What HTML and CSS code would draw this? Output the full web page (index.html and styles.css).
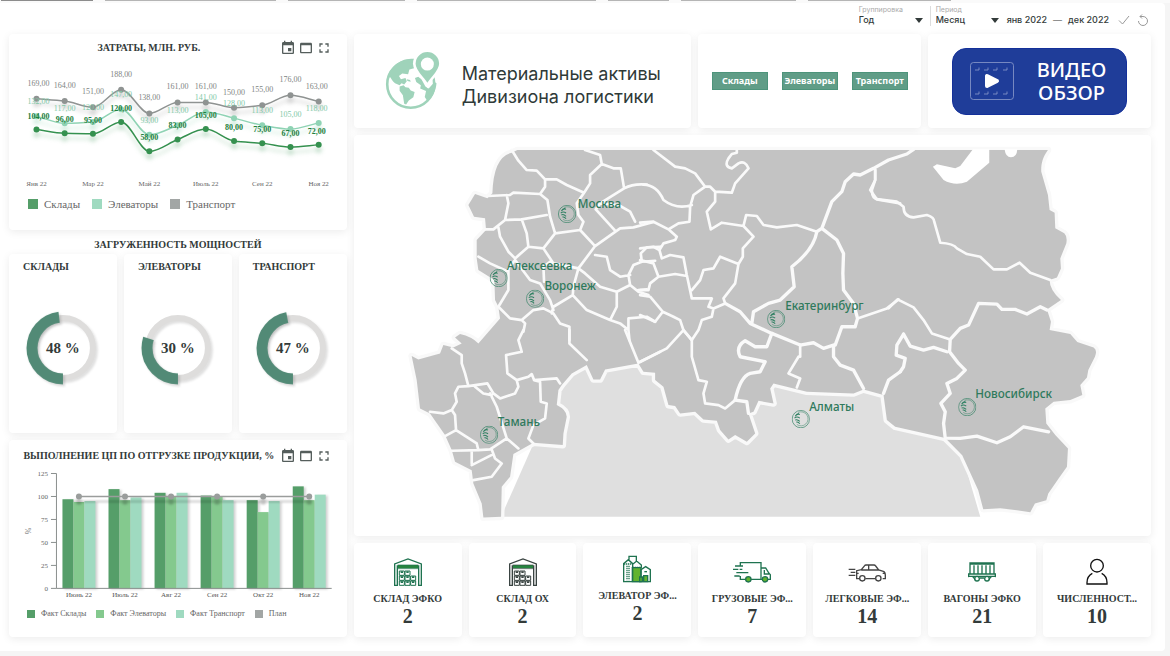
FILE: index.html
```html
<!DOCTYPE html>
<html lang="ru">
<head>
<meta charset="utf-8">
<title>Материальные активы Дивизиона логистики</title>
<link rel="stylesheet" href="styles.css">
</head>
<body>
<svg class="defs" aria-hidden="true">
  <symbol id="i-event" viewBox="0 0 24 24"><path d="M17 12h-5v5h5v-5zM16 1v2H8V1H6v2H5c-1.11 0-1.99.9-1.99 2L3 19c0 1.1.89 2 2 2h14c1.1 0 2-.9 2-2V5c0-1.1-.9-2-2-2h-1V1h-2zm3 18H5V8h14v11z"/></symbol>
  <symbol id="i-window" viewBox="0 0 24 24"><path d="M19 4H5c-1.11 0-2 .9-2 2v12c0 1.1.89 2 2 2h14c1.1 0 2-.9 2-2V6c0-1.1-.89-2-2-2zm0 14H5V8h14v10z"/></symbol>
  <symbol id="i-full" viewBox="0 0 24 24"><path d="M7 14H5v5h5v-2H7v-3zm-2-4h2V7h3V5H5v5zm12 7h-3v2h5v-5h-2v3zM14 5v2h3v3h2V5h-5z"/></symbol>
  <symbol id="i-down" viewBox="0 0 8 5"><path d="M0 0h8L4 5z"/></symbol>
  <symbol id="i-store" viewBox="0 0 84 84">
    <path d="M2 82V18L42 3l40 15v64h-8V24H10v58z" fill="none" stroke="currentColor" stroke-width="4"/>
    <rect x="12" y="21" width="60" height="10" fill="#26843f"/>
    <path d="M11 21h62M11 32h62" stroke="currentColor" stroke-width="2"/>
    <path d="M16 39h15v13H16zM33 39h15v13H33zM16 54h15v13H16zM33 54h15v13H33zM50 54h15v13H50zM16 69h15v13H16zM33 69h15v13H33zM50 69h15v13H50z" fill="#fff" stroke="currentColor" stroke-width="3"/>
    <path d="M20 40h7v5h-7zM37 40h7v5h-7zM20 55h7v5h-7zM37 55h7v5h-7zM54 55h7v5h-7zM20 70h7v5h-7zM37 70h7v5h-7zM54 70h7v5h-7z" fill="currentColor"/>
  </symbol>
  <symbol id="i-pin" viewBox="-27 -27 54 54">
    <g fill="none" stroke="#2f8062">
      <circle r="26" stroke-width="2"/>
      <path d="M-8-20a21 21 0 1 1-4 36" stroke-width="1.400"/>
      <path d="M-17-9q6-8 14-5M-19-3q7-6 16 0M-17 3q6-4 14 4M-14 9q6-2 11 5M-5-18q-9 3-12 9" stroke-width="3"/>
    </g>
  </symbol>
</svg>

<nav class="tabs" aria-label="Вкладки"><i class="tab tab--on"></i><i class="tab"></i><i class="tab"></i><i class="tab"></i><i class="tab"></i><i class="tab"></i><i class="tab"></i></nav>

<main class="page">
  <form class="filters">
    <div class="filter">
      <label for="group">Группировка</label>
      <div class="pick"><select id="group"><option>Год</option></select><svg class="pick-arrow"><use href="#i-down"/></svg></div>
    </div>
    <div class="filter filter--next">
      <label for="period">Период</label>
      <div class="pick"><select id="period"><option>Месяц</option></select><svg class="pick-arrow"><use href="#i-down"/></svg></div>
    </div>
    <div class="range"><span>янв 2022</span><span class="dash">—</span><span>дек 2022</span></div>
    <button class="tool" type="button" aria-label="Применить"><svg viewBox="0 0 12 12"><path d="M1 6.500 4.500 10 11 2"/></svg></button>
    <button class="tool" type="button" aria-label="Сбросить"><svg viewBox="0 0 12 12"><path d="M1.500 7A4.500 4.500 0 1 0 6 2.500H3M5 .5 3 2.500l2 2"/></svg></button>
  </form>

  <div class="board">
    <div class="side">
      <section class="card chart">
        <header class="card-head"><h2>ЗАТРАТЫ, МЛН. РУБ.</h2>
          <div class="tools"><button type="button" aria-label="Период"><svg><use href="#i-event"/></svg></button><button type="button" aria-label="Окно"><svg><use href="#i-window"/></svg></button><button type="button" aria-label="На весь экран"><svg><use href="#i-full"/></svg></button></div>
        </header>
        <svg class="plot" id="costs" viewBox="9 62 338 128" role="img" aria-label="Затраты по месяцам"></svg>
        <ul class="legend legend--big"><li><i class="c-store"></i>Склады</li><li><i class="c-elev"></i>Элеваторы</li><li><i class="c-gray"></i>Транспорт</li></ul>
      </section>

      <h2 class="side-title">ЗАГРУЖЕННОСТЬ МОЩНОСТЕЙ</h2>
      <div class="gauges">
        <section class="card gauge"><h3>СКЛАДЫ</h3>
          <svg viewBox="-40 -40 80 80"><circle class="ring" r="30"/><circle class="arc" r="31" pathLength="100" stroke-dasharray="48 100" transform="rotate(90)"/><text y="5">48 %</text></svg></section>
        <section class="card gauge"><h3>ЭЛЕВАТОРЫ</h3>
          <svg viewBox="-40 -40 80 80"><circle class="ring" r="30"/><circle class="arc" r="31" pathLength="100" stroke-dasharray="30 100" transform="rotate(90)"/><text y="5">30 %</text></svg></section>
        <section class="card gauge"><h3>ТРАНСПОРТ</h3>
          <svg viewBox="-40 -40 80 80"><circle class="ring" r="30"/><circle class="arc" r="31" pathLength="100" stroke-dasharray="47 100" transform="rotate(90)"/><text y="5">47 %</text></svg></section>
      </div>

      <section class="card chart chart--bars">
        <header class="card-head"><h2>ВЫПОЛНЕНИЕ ЦП ПО ОТГРУЗКЕ ПРОДУКЦИИ, %</h2>
          <div class="tools"><button type="button" aria-label="Период"><svg><use href="#i-event"/></svg></button><button type="button" aria-label="Окно"><svg><use href="#i-window"/></svg></button><button type="button" aria-label="На весь экран"><svg><use href="#i-full"/></svg></button></div>
        </header>
        <svg class="plot" id="plan" viewBox="9 470 338 134" role="img" aria-label="Выполнение плана"></svg>
        <ul class="legend"><li><i class="c-store"></i>Факт Склады</li><li><i class="c-mid"></i>Факт Элеваторы</li><li><i class="c-elev"></i>Факт Транспорт</li><li><i class="c-gray"></i>План</li></ul>
      </section>
    </div>

    <div class="content">
      <section class="card brand">
        <svg class="globe" viewBox="104 150 174 190">
          <g fill="#9fd3ba">
            <path d="M194 177C150 172 113 208 110 248l10-16c6 8 8 14 16 20l14 6 6-6 8 4 8-10-4-10-14 4-6-10 10-8 18 2 4-14 14-4 4-8-8-6 10-6-6-8z"/>
            <path d="M150 262l12-4 6 6 10 2 6 8 12 5-4 16-14 10-8 12-6-2-4-26-10-14zM172 240l10 2 2 5-10-2zM197 236l10-4 10 8 12 22 10 6 18-20 6 4c-2 22-10 42-28 54l-8-12 4-18-18-8 2-10-14-10z"/>
          </g>
          <circle cx="184" cy="255" r="72" fill="none" stroke="#9fd3ba" stroke-width="8"/>
          <path d="M235 258c-10-22-40-40-40-66a40 40 0 0 1 80 0c0 26-30 44-40 66z" fill="#9fd3ba" stroke="#fff" stroke-width="8"/>
          <circle cx="235" cy="193" r="20" fill="#fff"/>
        </svg>
        <h1>Материальные активы<br>Дивизиона логистики</h1>
      </section>
      <nav class="card links"><a href="#stores">Склады</a><a href="#elevators">Элеваторы</a><a href="#transport">Транспорт</a></nav>
      <section class="card video"><button class="video-btn" type="button">
        <svg viewBox="0 0 44 38"><rect x=".5" y=".5" width="43" height="37" rx="3" fill="none" stroke="#8d9ccc" stroke-width=".8"/>
          <path d="M5 8h4V5.500M14 8h4V5.500M23 8h4V5.500M33 8h4V5.500M5 32h4v-2.500M14 32h4v-2.500M23 32h4v-2.500M33 32h4v-2.500" fill="none" stroke="#8d9ccc" stroke-width=".8"/>
          <path d="M17 14v10l10-5z" fill="#fff" stroke="#fff" stroke-width="4" stroke-linejoin="round"/></svg>
        <span>ВИДЕО<br>ОБЗОР</span></button></section>

      <section class="card map">
        <svg viewBox="-138 -15 2391 1200" role="img" aria-label="Карта активов">
          <path class="steppe" d="M303 1130H1740L1686 945 1450 765 1000 600 700 600 480 730z"/>
          <path class="land" d="M352 30H1943C1925 55 1922 75 1923 95L1943 165 1948 210 1963 218 1965 265 1992 280Q2002 290 1998 310L1980 355 1982 385 1970 412 1948 420Q1948 450 1982 480L1940 508 1952 545 1948 570 2010 582 2031 606 2080 622Q2092 630 2084 650L2064 690 2060 712 2040 735 2046 765 2010 780 1960 785 1935 805 1938 850 1965 885 2003 925 2000 980 1975 1015 1944 1060 1938 1080 1904 1090 1890 1116 1850 1110 1800 1104 1749 1107 1734 1050 1686 945 1635 894 1485 860 1460 840 1450 765 1390 748 1360 760 1220 755 1120 730 1110 745 1120 790 1075 782 1060 815 1045 820 1065 880 1040 905 1005 885 985 898 960 870 950 842 910 838 885 815 840 820 825 798 805 795 790 740 765 720 765 698 730 695 715 670 615 688 600 718 580 718 560 675 515 700 485 735 475 750 470 795Q500 810 500 830L490 880 488 915 400 908 340 942 330 1010 305 1040 303 1130 250 1132 245 1090 220 1030 215 990 165 965 155 930 135 885 90 820 60 805 50 720 35 648 55 658 120 640 130 615 160 622 185 610 165 592 180 582Q215 590 235 610L300 535 295 500 285 480 283 420 235 390 230 355 230 300 258 270 255 235 222 230 205 195 225 162 262 175 277 160Q280 50 335 38z"/>
          <path class="lake" d="M1718 28H1767V68L1700 125Q1665 140 1630 120L1598 80 1610 73 1665 85 1680 78zM1813 28H1851Q1850 52 1832 52 1816 52 1813 28z"/>
          <g class="line">
            <path d="M335 30L355 62 380 90 410 92 435 118 470 118 500 135 552 158M435 118V140L420 162 340 158 330 165 262 168M420 162L442 180 450 230 465 280 540 270 585 318M552 158L530 190 535 225 550 245 540 270M552 158L570 130V105L605 72 600 45 555 30M605 72L640 85H662L672 145 600 190 587 208 645 272M672 145Q700 130 740 134M600 190L655 195 690 215 705 245M585 318L660 265 700 262 760 246M320 165L325 190 315 240 365 238 440 225M315 240L280 268H255M365 238L380 280 385 320 345 355 325 335 300 290 295 262M385 320L430 325 465 280M430 325L460 370 535 385 585 318M345 360L325 385V450L295 500M235 350L270 370 325 395M345 360L390 420 420 430 450 480 460 510M460 370L450 365 430 380 432 425M535 385L520 440 518 465 460 500 455 520M518 465L560 510 630 540 650 500V455L600 440 555 400 535 385M585 345L620 350 630 390 660 410 690 405M650 455L690 435 685 405 700 375 725 365 765 362M725 365L722 340 740 322 780 320M690 435L715 455 745 465M715 450L740 448M630 540L660 550 685 570V535L740 530 765 545M685 570L688 600M295 500L330 535 365 540 375 550 370 575M365 540L400 510 430 505 460 520 480 550 508 560V600"/>
            <path transform="translate(0 570)" d="M508 0V40L560 90M370 0L355 30 365 65 318 75 322 130 350 150 385 140 395 132 402 150 470 145 480 160M350 150L355 170 345 190 300 205 280 190 262 160 205 168 175 170 165 190 170 215 155 240 130 250 90 245M155 55L185 75V100L195 130 205 168M155 240L165 255 168 300 230 340 235 360 270 358 320 325 355 355M168 300L135 318M270 190L290 230 320 325M225 170L250 190 275 195M155 362L235 360M215 362V400M275 358L285 385 305 400 275 440 220 450M215 405L280 372M402 150L420 155 422 215 440 220 435 265 400 285 385 325 400 340M675 0L715 98 780 65"/>
            <path transform="translate(720)" d="M40 30L105 80 135 85 165 100 195 140 160 165 150 200 148 245 115 250 85 268 40 245 0 248M10 134Q50 135 70 180 110 210 155 195M85 268L110 290 105 300 70 310 58 330 65 355 90 345 130 352 140 405 155 475M195 140L210 140 225 155V185L200 215 212 268 245 248 310 258 340 290 308 325V350L295 372 240 350 220 385 190 390 180 420 155 450M225 155L275 158 285 130 325 85Q315 60 295 70L275 85Q250 80 265 55L275 42 290 38V30M310 258L318 225 350 228 370 255 410 262 470 255 530 275M295 372L285 430 250 475 255 490 220 505 205 500 215 475 155 475M652 535L740 505 775 478M705 88V120L690 150 710 178 780 190M0 325L40 320 58 330M0 360L40 370 55 410 105 402 140 408M55 410L30 430 25 450 0 450M0 465L30 470 68 515 100 530 120 540 130 570 155 600M68 515L45 545 0 525M220 505L215 530 185 540 175 570 155 600"/>
            <path transform="translate(720 570)" d="M155 30L130 0 80 55 40 75 0 95M155 30V80L175 150 200 155 190 190 195 220 235 225 255 235 285 210M475 80L445 130 480 145 470 172M480 45V80"/>
            <path transform="translate(1380)" d="M45 90V120L35 150Q35 178 55 178L110 185 130 200Q130 230 160 232L200 225Q222 232 222 245L240 308Q280 310 290 325L320 342 360 350 400 388 440 388 478 368 510 398 570 420M85 505L112 478 160 502 190 540 215 580 270 598"/>
          </g>
          <g class="line line--wide">
            <path transform="translate(720)" d="M530 275L545 265 575 185 605 155 615 125 640 102 660 105 700 85 745 60 800 42 820 28M530 275Q520 330 455 380L462 440 420 480 385 490 340 515 335 550M545 265L590 300 610 340 608 400 610 450 640 490 652 535 645 560 605 560 585 615M255 490L300 515 330 550 395 580 480 615"/>
            <path transform="translate(720 570)" d="M285 210Q300 140 330 130L360 125 375 95 300 80Q285 50 315 32L345 50 380 50 395 10M285 210L320 215 325 250M480 45L520 38 550 55 580 45V80L600 105 640 120 670 175M730 190L745 150 780 125"/>
            <path d="M1650 598L1680 565 1705 555 1735 490 1790 492 1805 508 1845 508 1880 522 1920 500 1940 510M1650 598L1648 635 1675 670 1695 690 1670 715 1640 730 1650 760 1622 790 1635 815 1630 850 1635 894M1510 582L1530 618 1570 630 1600 622 1640 635M1510 582L1490 615 1488 645 1515 655 1510 680 1500 695M1635 894L1680 895 1730 888 1790 908 1830 890 1870 860 1945 875"/>
          </g>
          <g class="pins">
            <use href="#i-pin" x="474" y="195" width="54" height="54"/><text x="533" y="203">Москва</text>
            <use href="#i-pin" x="269" y="387" width="54" height="54"/><text x="320" y="391">Алексеевка</text>
            <use href="#i-pin" x="378" y="449" width="54" height="54"/><text x="433" y="450">Воронеж</text>
            <use href="#i-pin" x="1101" y="510" width="54" height="54"/><text x="1155" y="510">Екатеринбург</text>
            <use href="#i-pin" x="240" y="857" width="54" height="54"/><text x="293" y="858">Тамань</text>
            <use href="#i-pin" x="1175" y="810" width="54" height="54"/><text x="1227" y="812">Алматы</text>
            <use href="#i-pin" x="1674" y="774" width="54" height="54"/><text x="1725" y="774">Новосибирск</text>
          </g>
        </svg>
      </section>

      <section class="card kpi"><svg class="green"><use href="#i-store"/></svg><h3>СКЛАД ЭФКО</h3><b>2</b></section>
      <section class="card kpi"><svg class="dark"><use href="#i-store"/></svg><h3>СКЛАД ОХ</h3><b>2</b></section>
      <section class="card kpi kpi--raised"><svg class="green" viewBox="0 0 84 84" fill="none" stroke="currentColor" stroke-width="4">
        <path d="M28 38h26v42H28z" fill="#62b32e"/><path d="M2 80V26L16 14l13 12v54zM18 14V4h22v16M29 36V28l12-10 14 12v8M54 80V44l14-9 14 9v36zM0 80h84"/><path d="M2 27h27M29 37h26M12 32v44M18 32v44" stroke-dasharray="4 2"/><path d="M50 66h8v14h-8zM62 62h12v18H62z" fill="#62b32e"/><path d="M64 50h8"/></svg><h3>ЭЛЕВАТОР ЭФ...</h3><b>2</b></section>
      <section class="card kpi"><svg class="green wide" viewBox="0 0 114 84" fill="none" stroke="currentColor" stroke-width="4">
        <path d="M22 24V14h62v50H54M38 64H22V54M84 30h14l10 16 4 4v14h-8M84 64h4M94 36v12h14M6 24h24M0 34h16M20 34h8M10 44h36M4 54h16"/><circle cx="46" cy="64" r="8" fill="#62b32e"/><circle cx="96" cy="64" r="8" fill="#62b32e"/></svg><h3>ГРУЗОВЫЕ ЭФ...</h3><b>7</b></section>
      <section class="card kpi"><svg class="gray wide" viewBox="0 0 114 84" fill="none" stroke="currentColor" stroke-width="4">
        <path d="M34 62h-8V38l14-3 10-12q1-2 4-2h24q3 0 5 3l9 12 14 4q6 2 6 12v10h-8M52 62h30M40 36h52M62 22v14M2 34h20M8 43h14M2 52h20M26 46h6M104 46h6"/><circle cx="43" cy="61" r="8"/><circle cx="91" cy="61" r="8"/></svg><h3>ЛЕГКОВЫЕ ЭФ...</h3><b>14</b></section>
      <section class="card kpi"><svg class="green" viewBox="0 0 84 84" fill="none" stroke="currentColor" stroke-width="4">
        <path d="M6 48V15h72v33M4 18h76M2 48h80v7H2zM18 22v26M30 22v26M42 22v26M54 22v26M66 22v26M0 52v6M84 52v6M14 56l8 9M70 56l-8 9M36 60h12"/><circle cx="27" cy="62" r="7"/><circle cx="57" cy="62" r="7"/></svg><h3>ВАГОНЫ ЭФКО</h3><b>21</b></section>
      <section class="card kpi"><svg class="black" viewBox="0 0 84 84" fill="none" stroke="currentColor" stroke-width="4">
        <circle cx="42" cy="23" r="19"/><path d="M28 46q-16 8-16 28v4h60v-4q0-20-16-28"/></svg><h3>ЧИСЛЕННОСТ...</h3><b>10</b></section>
    </div>
  </div>
</main>
<script src="charts.js"></script>
</body>
</html>
```
FILE: styles.css
```css
* { box-sizing: border-box; }
body { margin: 0; min-height: 100vh; background: #f5f5f5; color: #333b3a; font-family: "Liberation Serif", serif; }
h1, h2, h3, ul { margin: 0; padding: 0; font-weight: 700; }
button { padding: 0; border: 0; background: none; cursor: pointer; }
.defs { display: none; }

.tabs { display: grid; grid-template-columns: 92px 171px 117px 179px 61px 115px 143px; gap: 12px; height: 3px; padding-left: 1px; background: #fafafa; }
.tab { height: 1px; background: #b5b5b5; }
.tab--on { background: #8c8c8c; }

.page { margin-right: 5px; padding: 2px 9px 14px; background: #fff; border-radius: 0 4px 4px 0; }
.filters { display: flex; justify-content: flex-end; align-items: flex-end; height: 29px; padding: 0 7px 8px 0; font: 500 9px/12px Inter, "Noto Sans", sans-serif; }
.filter { width: 71px; }
.filter--next { padding-left: 5px; width: 77px; border-left: 1px solid #ddd; }
.filter label { display: block; font-size: 7px; line-height: 8px; font-weight: 400; color: #aaa; }
.pick { position: relative; }
.pick select { display: block; width: 100%; padding: 0 12px 0 0; border: 0; background: none; font: inherit; color: inherit; appearance: none; }
.pick-arrow { position: absolute; right: 7px; top: 4px; width: 8px; height: 5px; fill: #333b3a; pointer-events: none; }
.filter--next .pick-arrow { right: 8px; }
.range { display: flex; gap: 6px; padding-right: 9px; }
.dash { color: #777; }
.tool { width: 12px; height: 12px; }
.tool + .tool { margin-left: 7px; }
.tool svg { display: block; fill: none; stroke: #999; stroke-width: 1; }

.board { display: grid; grid-template-columns: repeat(10, 1fr); gap: 7px; margin-right: 5px; }
.side { grid-column: span 3; display: flex; flex-direction: column; min-width: 0; }
.content { grid-column: span 7; display: grid; grid-template-columns: repeat(7, 1fr); grid-template-rows: auto 1fr auto; gap: 7px; min-width: 0; }
.card { background: #fff; border-radius: 4px; box-shadow: 0 2px 8px rgba(0, 0, 0, .08); min-width: 0; }

.card-head { display: flex; justify-content: center; align-items: center; height: 28px; padding: 0 15px; gap: 6px; }
.chart--bars .card-head { height: 30px; padding-top: 2px; }
.card-head h2 { flex: 1; text-align: center; }
h2, .gauge h3 { font-size: 10px; line-height: 14px; white-space: nowrap; }
.tools { display: flex; gap: 2px; }
.tools button { width: 16px; height: 16px; }
.tools svg { display: block; width: 16px; height: 16px; fill: #555e5c; }
.plot { display: block; width: 100%; }
.plot text { font-family: "Liberation Serif", serif; }
.legend { display: flex; gap: 10px; padding: 4px 18px 17px; list-style: none; font-size: 8px; line-height: 12px; font-weight: 400; color: #666; }
.legend li { display: flex; align-items: center; gap: 6px; }
.legend i { width: 8px; height: 8px; }
.legend--big { gap: 12px; padding: 7px 19px 19px; font-size: 11px; line-height: 14px; }
.legend--big i { width: 10px; height: 10px; }
.c-store { background: #559e69; }
.c-mid { background: #84c98e; }
.c-elev { background: #9fdac0; }
.c-gray { background: #a2a6a5; }

.side-title { padding: 8px 0 2px; text-align: center; }
.gauges { display: grid; grid-template-columns: repeat(3, 1fr); gap: 7px; margin-bottom: 7px; }
.gauge { padding: 6px 14px 45px; }
.gauge svg { display: block; width: 100%; margin-top: 34px; }
.gauge text { font-size: 15px; font-weight: 700; text-anchor: middle; fill: #333b3a; }
.ring, .arc { fill: none; }
.ring { stroke: #dedddc; stroke-width: 6; filter: drop-shadow(2px 2px 1px rgba(0, 0, 0, .12)); }
.arc { stroke: #528a76; stroke-width: 11; filter: drop-shadow(2px -2px 1px rgba(0, 0, 0, .15)); }

.brand { grid-column: span 3; display: flex; align-items: center; gap: 20px; padding: 16px 30px; }
.globe { flex: none; width: 58px; height: 62px; }
h1 { padding-top: 8px; font: 400 18px/23px Inter, sans-serif; color: #2f3a38; white-space: nowrap; }
.links { grid-column: span 2; display: flex; justify-content: center; align-items: center; gap: 14px; }
.links a { width: 56px; background: #609d87; border: 1px solid #4d947b; color: #fff; font: 700 9px/16px "Noto Sans", sans-serif; text-align: center; text-decoration: none; }
.video { grid-column: span 2; display: flex; justify-content: center; align-items: center; }
.video-btn { display: flex; align-items: center; gap: 21px; padding: 9px 18px 10px 17px; border: 1px solid #14309a; border-radius: 14px; background: #1f3d99; color: #fff; font: 500 20px/23px "Noto Sans", sans-serif; }
.video-btn svg { width: 44px; height: 38px; }
.video-btn span { width: 73px; }

.map { grid-column: 1 / -1; }
.map svg { display: block; width: 100%; }
.steppe { fill: #dfdfdf; }
.land { fill: #c3c3c3; stroke: #f9f9f9; stroke-width: 20; stroke-linejoin: round; paint-order: stroke; }
.lake { fill: #fff; }
.line { fill: none; stroke: #fafafa; stroke-width: 8; stroke-linejoin: round; stroke-linecap: round; }
.line--wide { stroke-width: 10; }
.pins text { font: 500 35px "Noto Sans", sans-serif; fill: #2f7a5c; }

.kpi { display: flex; flex-direction: column; align-items: center; padding: 15px 4px 11px; }
.kpi--raised { padding: 12px 4px 14px; }
.kpi svg { width: 28px; height: 28px; margin-bottom: 6px; }
.kpi svg.wide { width: 38px; }
.kpi h3 { font-size: 10px; line-height: 14px; white-space: nowrap; }
.kpi b { font-size: 20px; line-height: 20px; }
.green { color: #1f7350; }
.dark { color: #3a4442; }
.gray { color: #444; }
.black { color: #111; }
```
FILE: charts.js
```js
const NS = 'http://www.w3.org/2000/svg';
function add(parent, tag, attrs, text) {
  const el = document.createElementNS(NS, tag);
  for (const k in attrs) el.setAttribute(k, attrs[k]);
  if (text !== undefined) el.textContent = text;
  parent.appendChild(el);
  return el;
}

// Monotone cubic through equally spaced points
function smooth(xs, ys) {
  const n = xs.length, h = xs[1] - xs[0], s = [], m = [];
  for (let i = 0; i < n - 1; i++) s.push((ys[i + 1] - ys[i]) / h);
  for (let i = 0; i < n; i++) {
    if (i === 0) m.push(s[0]);
    else if (i === n - 1) m.push(s[n - 2]);
    else m.push(s[i - 1] * s[i] <= 0 ? 0 : 2 * s[i - 1] * s[i] / (s[i - 1] + s[i]));
  }
  let d = `M${xs[0]},${ys[0]}`;
  for (let i = 0; i < n - 1; i++)
    d += `C${xs[i] + h / 3},${ys[i] + m[i] * h / 3} ${xs[i + 1] - h / 3},${ys[i + 1] - m[i + 1] * h / 3} ${xs[i + 1]},${ys[i + 1]}`;
  return d;
}

const costs = document.getElementById('costs');
const xs = Array.from({ length: 11 }, (_, i) => 36.5 + i * 28.25);
const series = [
  { v: [169, 164, 151, 188, 138, 161, 161, 150, 155, 176, 163], c: '#8f9392', t: '#808483', w: 400, dy: 13, sh: 'rgba(90,90,90,.3)' },
  { v: [132, 117, 120, 147, 93, 113, 141, 128, 113, 105, 118], c: '#8fd3b4', t: '#7fc9a7', w: 400, dy: 12, sh: 'rgba(90,190,140,.3)' },
  { v: [104, 96, 95, 120, 58, 83, 105, 80, 75, 67, 72], c: '#35914f', t: '#22803d', w: 700, dy: 11, sh: 'rgba(53,145,79,.3)' }
];
series.forEach(s => {
  const ys = s.v.map(v => 179 - v * 0.475);
  const g = add(costs, 'g', { style: `filter:drop-shadow(0 5px 2px ${s.sh})` });
  add(g, 'path', { d: smooth(xs, ys), fill: 'none', stroke: s.c, 'stroke-width': 1.5 });
  xs.forEach((x, i) => add(g, 'circle', { cx: x, cy: ys[i], r: 3, fill: s.c }));
  s.ys = ys;
});
series.forEach(s => xs.forEach((x, i) =>
  add(costs, 'text', { x: x + (i ? i > 9 ? -2 : 0 : 2), y: s.ys[i] - s.dy, 'font-size': 8, 'font-weight': s.w, fill: s.t, 'text-anchor': 'middle' }, s.v[i] + ',00')));
['Янв 22', 'Мар 22', 'Май 22', 'Июль 22', 'Сен 22', 'Ноя 22'].forEach((t, i) =>
  add(costs, 'text', { x: 36.5 + i * 56.5, y: 186, 'font-size': 7, fill: '#666', 'text-anchor': 'middle' }, t));

const plan = document.getElementById('plan');
const months = ['Июнь 22', 'Июль 22', 'Авг 22', 'Сен 22', 'Окт 22', 'Ноя 22'];
const facts = [[97, 94, 95], [108, 96, 99], [104, 100, 104], [101, 100, 96], [96, 83, 95], [111, 96, 102]];
const y = v => 588.5 - v * 0.92;
facts.forEach((f, i) => {
  const g = add(plan, 'g', { style: 'filter:drop-shadow(2px 1px 1px rgba(0,0,0,.18))' });
  f.forEach((v, k) => add(g, 'rect', { x: 62.5 + i * 46.1 + k * 11, y: y(v), width: 11, height: v * 0.92, fill: ['#559e69', '#84c98e', '#9fdac0'][k] }));
});
add(plan, 'path', { d: 'M56.500 473.500V588.500H332', fill: 'none', stroke: '#8a8f8e' });
[0, 25, 50, 75, 100, 125].forEach(v => {
  add(plan, 'path', { d: `M51 ${y(v)}h5.500`, stroke: '#8a8f8e' });
  add(plan, 'text', { x: 48, y: y(v) + 2.5, 'font-size': 7, fill: '#666', 'text-anchor': 'end' }, v);
});
const pg = add(plan, 'g', { style: 'filter:drop-shadow(0 5px 1px rgba(0,0,0,.25))' });
add(pg, 'path', { d: `M79 ${y(100)}h230.500`, stroke: '#9a9d9c', 'stroke-width': 1.5 });
months.forEach((t, i) => {
  const x = 79 + i * 46.1;
  add(pg, 'circle', { cx: x, cy: y(100), r: 3, fill: '#9a9d9c' });
  add(plan, 'text', { x, y: 597, 'font-size': 7, fill: '#555', 'text-anchor': 'middle' }, t);
});
add(plan, 'text', { x: 0, y: 0, 'font-size': 8, fill: '#777', 'text-anchor': 'middle', transform: 'translate(31 531) rotate(-90)' }, '%');
```
